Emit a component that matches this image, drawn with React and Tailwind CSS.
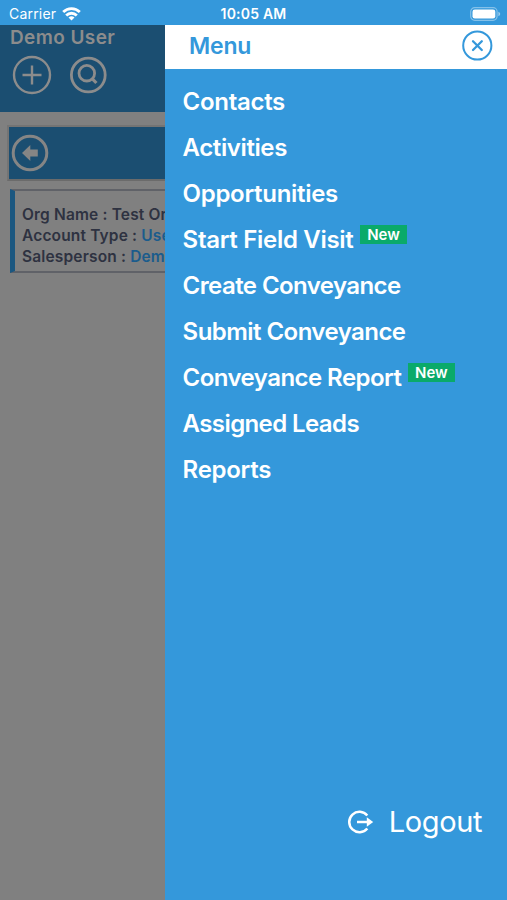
import React from "react"

const menuItems = [
  { label: "Contacts", tracking: "tracking-[-0.3px]" },
  { label: "Activities", tracking: "tracking-[-0.4px]" },
  { label: "Opportunities", tracking: "tracking-[-0.3px]" },
  { label: "Start Field Visit", tracking: "tracking-[-0.3px]", isNew: true },
  { label: "Create Conveyance", tracking: "tracking-[-0.58px]" },
  { label: "Submit Conveyance", tracking: "tracking-[-0.55px]" },
  { label: "Conveyance Report", tracking: "tracking-[-0.55px]", isNew: true },
  { label: "Assigned Leads", tracking: "tracking-[-0.6px]" },
  { label: "Reports", tracking: "tracking-[-0.3px]" },
]

const details = [
  { label: "Org Name", value: "Test Org", plain: true },
  { label: "Account Type", value: "User" },
  { label: "Salesperson", value: "Demo User" },
]

const WifiIcon = () => (
  <svg className="h-[14px] w-[19px]" viewBox="0 0 19 14" fill="none" stroke="white" strokeWidth="2.8">
    <path d="M1.2 5.1a11.8 11.8 0 0 1 16.6 0" />
    <path d="M4.2 8.4a7.6 7.6 0 0 1 10.6 0" />
    <path d="M9.5 13.6 6.5 10.6a4.3 4.3 0 0 1 6 0Z" fill="white" stroke="none" />
  </svg>
)

const BatteryIcon = () => (
  <svg className="h-[14px] w-[31px]" viewBox="0 0 31 14" fill="none">
    <rect x="0.7" y="0.7" width="26.4" height="12.6" rx="4" stroke="white" strokeOpacity="0.4" strokeWidth="1.2" />
    <rect x="2.5" y="2.5" width="22.8" height="9" rx="2.3" fill="white" />
    <path d="M28.4 4.8c2.4.8 2.4 3.6 0 4.4Z" fill="white" fillOpacity="0.5" />
  </svg>
)

const PlusIcon = () => (
  <svg className="size-10" viewBox="0 0 40 40" fill="none" stroke="currentColor" strokeWidth="2.4">
    <circle cx="20" cy="20" r="18" />
    <path d="M20 10.5v19M10.5 20h19" />
  </svg>
)

const SearchIcon = () => (
  <svg className="size-10" viewBox="0 0 40 40" fill="none" stroke="currentColor">
    <circle cx="20.3" cy="20" r="16.9" strokeWidth="2.8" />
    <circle cx="18.8" cy="18.2" r="7.8" strokeWidth="2.8" />
    <path d="m23.6 23.1 4.8 4.9" strokeWidth="3.2" />
  </svg>
)

const BackIcon = () => (
  <svg className="size-10" viewBox="0 0 40 40" fill="none">
    <circle cx="20" cy="20" r="16.8" stroke="currentColor" strokeWidth="3" />
    <path d="m12 20 8.3-8v4.4h7.5v7.2h-7.5V28Z" fill="currentColor" />
  </svg>
)

const CloseIcon = () => (
  <svg className="size-8" viewBox="0 0 32 32" fill="none" stroke="currentColor">
    <circle cx="16.3" cy="15.5" r="14.1" strokeWidth="2" />
    <path d="m12 11.2 8.8 8.8M20.8 11.2 12 20" strokeWidth="2.3" strokeLinecap="round" />
  </svg>
)

const LogoutIcon = () => (
  <svg className="h-6 w-7" viewBox="0 0 28 24" fill="none">
    <path d="M20.3 5.5a10.2 10.2 0 1 0 0 13" stroke="white" strokeWidth="2.5" />
    <path d="M10 12h11" stroke="white" strokeWidth="2.5" />
    <path d="m19.8 7.2 6.4 4.8-6.4 4.8Z" fill="white" />
  </svg>
)

const StatusBar = () => (
  <div className="grid h-[25px] shrink-0 grid-cols-3 items-center bg-[#3498db] pt-[2px] text-white">
    <div className="flex items-center gap-[6px] pl-[9px] text-[14px] tracking-[0.2px]">
      <span>Carrier</span>
      <WifiIcon />
    </div>
    <span className="text-center text-[14px] font-semibold tracking-[0.2px]">10:05 AM</span>
    <div className="flex justify-end pr-[6px]">
      <BatteryIcon />
    </div>
  </div>
)

const PageBehind = () => (
  <div className="w-[165px] shrink-0 overflow-hidden bg-[#808080]">
    <div className="h-[87px] bg-[#1b4e71] text-[#8c8c8c]">
      <p className="pl-[10px] text-[19px] leading-[25px] font-semibold tracking-[0.4px] whitespace-nowrap">Demo User</p>
      <div className="flex gap-4 pl-3 pt-[5px]">
        <PlusIcon />
        <SearchIcon />
      </div>
    </div>
    <div className="mt-[13px] ml-[7px] flex h-14 w-[480px] items-center border-2 border-t-[#747474] border-r-[#6b6b6b] border-b-[#6b6b6b] border-l-[#747474] bg-[#1b4e71] pb-px pl-px text-[#858585]">
      <BackIcon />
    </div>
    <div className="mt-2 ml-[10px] h-[84px] w-[480px] border-2 border-l-[5px] border-y-[#606268] border-r-[#606268] border-l-[#1b5780] pt-[13px] pl-[7px] text-[15.5px] leading-[21px] font-semibold tracking-[0.16px]">
      {details.map((row) => (
        <p key={row.label} className="whitespace-nowrap text-[#2e3241]">
          {row.label} : <span className={row.plain ? "" : "text-[#1b5c8c]"}>{row.value}</span>
        </p>
      ))}
    </div>
  </div>
)

const Drawer = () => (
  <div className="flex flex-1 flex-col bg-[#3498db]">
    <div className="flex h-11 items-center justify-between bg-white pr-[14px] pl-6 text-[#3498db]">
      <h1 className="pb-[2px] text-[23px] font-semibold tracking-[-0.2px]">Menu</h1>
      <button type="button" aria-label="Close" className="pb-[3px]">
        <CloseIcon />
      </button>
    </div>
    <nav className="flex flex-col pt-[9.6px] pl-[17.6px] text-white">
      {menuItems.map((item) => (
        <a key={item.label} className="flex h-[46px] items-center whitespace-nowrap">
          <span className={`text-[24px] leading-7 font-semibold ${item.tracking}`}>{item.label}</span>
          {item.isNew && (
            <span className="mb-[10px] ml-[6.5px] h-[19px] w-[47px] bg-[#0aaa6a] text-center text-[15px] leading-[19px] font-semibold">
              New
            </span>
          )}
        </a>
      ))}
    </nav>
    <button type="button" className="mt-auto mr-[25px] mb-[58px] flex h-10 items-center gap-[14px] self-end text-white">
      <LogoutIcon />
      <span className="text-[29px] tracking-[-0.4px]">Logout</span>
    </button>
  </div>
)

const App = () => (
  <div className="flex h-screen w-full flex-col overflow-hidden font-['Inter',sans-serif]">
    <StatusBar />
    <div className="flex min-h-0 flex-1">
      <PageBehind />
      <Drawer />
    </div>
  </div>
)

export default App
